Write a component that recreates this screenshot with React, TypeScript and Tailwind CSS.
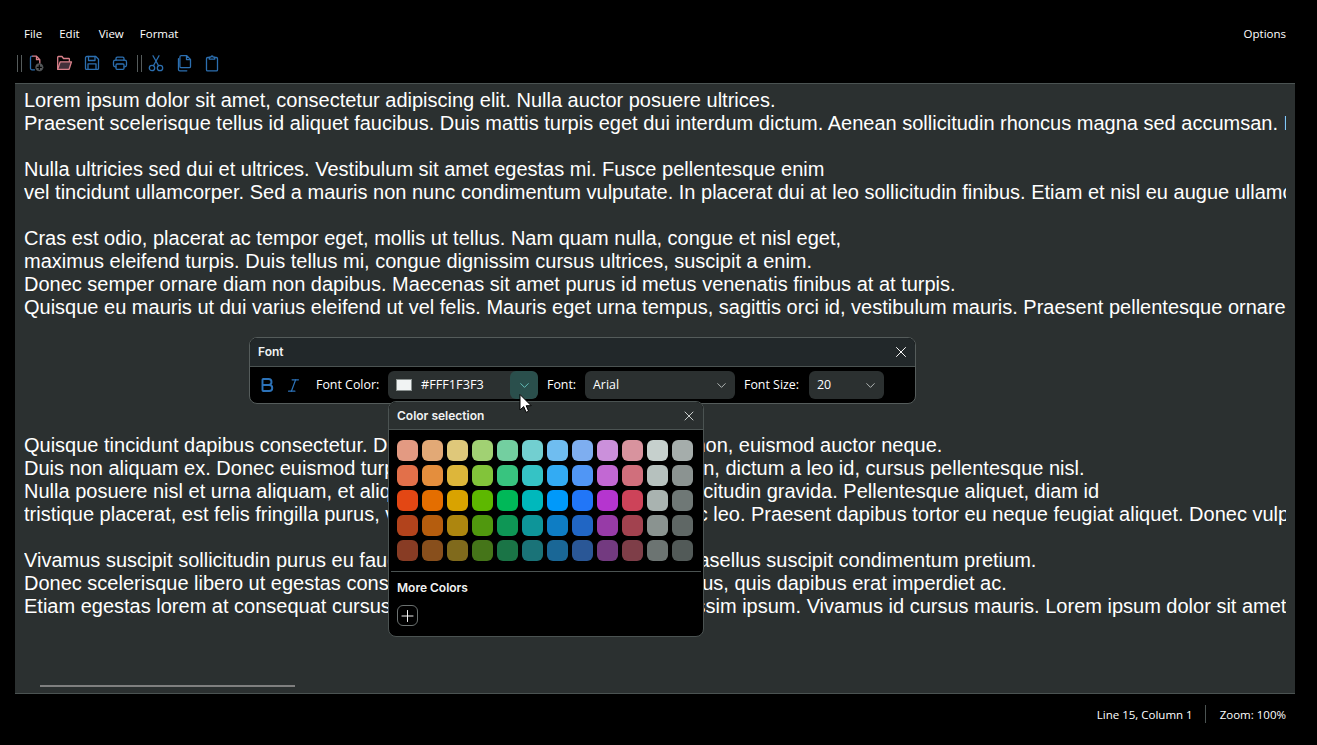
import { X, ChevronDown, Plus, Bold, Italic } from "lucide-react";

const swatches = [
  ["#E39A82","#E2A976","#DFC87A","#A1D173","#73CFA0","#72CFD0","#6FBDF0","#7EAEF0","#CB90DB","#D8939E","#C6D0CD","#A5ADAB"],
  ["#E2704A","#E48E3D","#DDB63A","#82C43A","#38C47F","#35C3C5","#33ABF3","#5096F5","#C268D3","#D06F7C","#B6C1BE","#8B9391"],
  ["#E34714","#E46E00","#D9A300","#5DB800","#00B858","#00B8BC","#0099FA","#2176F8","#B535CF","#CD4359","#A9B3B0","#6F7876"],
  ["#B2431C","#B55D0E","#AD860F","#50980E","#0E9655","#0E9599","#0E7DC4","#2166C4","#973BA7","#A2424F","#8A9390","#5F6765"],
  ["#883C24","#884F1C","#806A1C","#457519","#1A7446","#1A7378","#1A6796","#2A5796","#733A80","#7E3E48","#6C7472","#525A58"],
];

const lines = [
  "Lorem ipsum dolor sit amet, consectetur adipiscing elit. Nulla auctor posuere ultrices.",
  "Praesent scelerisque tellus id aliquet faucibus. Duis mattis turpis eget dui interdum dictum. Aenean sollicitudin rhoncus magna sed accumsan. Integer vitae nisl non velit",
  "",
  "Nulla ultricies sed dui et ultrices. Vestibulum sit amet egestas mi. Fusce pellentesque enim",
  "vel tincidunt ullamcorper. Sed a mauris non nunc condimentum vulputate. In placerat dui at leo sollicitudin finibus. Etiam et nisl eu augue ullamcorper",
  "",
  "Cras est odio, placerat ac tempor eget, mollis ut tellus. Nam quam nulla, congue et nisl eget,",
  "maximus eleifend turpis. Duis tellus mi, congue dignissim cursus ultrices, suscipit a enim.",
  "Donec semper ornare diam non dapibus. Maecenas sit amet purus id metus venenatis finibus at at turpis.",
  "Quisque eu mauris ut dui varius eleifend ut vel felis. Mauris eget urna tempus, sagittis orci id, vestibulum mauris. Praesent pellentesque ornare",
  "",
  "",
  "",
  "",
  "",
  "Quisque tincidunt dapibus consectetur. Donec vitae ac lorem porta rhoncus non, euismod auctor neque.",
  "Duis non aliquam ex. Donec euismod turpis vel felis tempor, mollis sapien non, dictum a leo id, cursus pellentesque nisl.",
  "Nulla posuere nisl et urna aliquam, et aliquam nunc nisi dapibus. Integer sollicitudin gravida. Pellentesque aliquet, diam id",
  "tristique placerat, est felis fringilla purus, vitae gravida mauris urna sed ut nec leo. Praesent dapibus tortor eu neque feugiat aliquet. Donec vulputate",
  "",
  "Vivamus suscipit sollicitudin purus eu faucibus. Sed vel lectus eget nunc. Phasellus suscipit condimentum pretium.",
  "Donec scelerisque libero ut egestas consequat. Nunc vel nisl lacus tellus purus, quis dapibus erat imperdiet ac.",
  "Etiam egestas lorem at consequat cursus. Aenean ac dolor nec nisi eu dignissim ipsum. Vivamus id cursus mauris. Lorem ipsum dolor sit amet",
];

const BLUE = "#2C6FB0";
const PINK = "#D9808A";

function Icon({ children }: { children: React.ReactNode }) {
  return (
    <svg width="18" height="18" viewBox="0 0 18 18" fill="none" stroke={BLUE} strokeWidth="1.3" strokeLinejoin="round" strokeLinecap="round">
      {children}
    </svg>
  );
}

function NewFileIcon() {
  return (
    <Icon>
      <path d="M5.500 2.200H5A1.500 1.500 0 0 0 3.500 3.700v10.600A1.500 1.500 0 0 0 5 15.800h2.500" />
      <path d="M5.800 2.200H9.500l3.300 3.500v3.500M9.500 2.200v3.500h3.300" stroke={PINK} />
      <circle cx="12.300" cy="13.300" r="3.700" fill="#55595A" stroke="#55595A" strokeWidth="0.500" />
      <path d="M12.300 11.200v4.200M10.200 13.300h4.200" stroke="#000" strokeWidth="1.200" />
    </Icon>
  );
}
function FolderIcon() {
  return (
    <Icon>
      <path d="M2.700 15V3.200a0.700 0.700 0 0 1 0.700-0.700H7l1.500 2h5.200a0.700 0.700 0 0 1 0.700 0.700V7.500" stroke={PINK} />
      <path d="M2.700 15.300L5.200 7.800h11.300l-2.400 7.500z" stroke={PINK} fill="#43303A" />
    </Icon>
  );
}
function SaveIcon() {
  return (
    <Icon>
      <path d="M3.800 2.500h9l2.700 2.700v9.200a1 1 0 0 1-1 1H3.500a1 1 0 0 1-1-1V3.800a1.300 1.300 0 0 1 1.300-1.300z" />
      <path d="M5.500 2.500v4h6.500v-4M5 15.400v-5.600h8v5.600" />
    </Icon>
  );
}
function PrinterIcon() {
  return (
    <Icon>
      <path d="M5 6.200V4.500a1.300 1.300 0 0 1 1.300-1.300h5.400A1.300 1.300 0 0 1 13 4.500v1.700" />
      <path d="M5 12.800H4.200a1.700 1.700 0 0 1-1.700-1.700V8a1.800 1.800 0 0 1 1.800-1.800h9.400A1.800 1.800 0 0 1 15.500 8v3.100a1.700 1.700 0 0 1-1.700 1.700H13" />
      <rect x="5" y="10" width="8" height="5.300" rx="1" />
    </Icon>
  );
}
function ScissorsIcon() {
  return (
    <Icon>
      <circle cx="5" cy="14" r="2.700" />
      <circle cx="13" cy="14" r="2.700" />
      <path d="M6.400 11.700L12 1.800M11.600 11.700L6 1.800" />
    </Icon>
  );
}
function CopyIcon() {
  return (
    <Icon>
      <path d="M6.200 1.700h5.600l3.700 3.700v7a1.300 1.300 0 0 1-1.300 1.300H6.200a1.300 1.300 0 0 1-1.300-1.300V3a1.300 1.300 0 0 1 1.300-1.300zM11.500 1.800v3.800h3.900" />
      <path d="M3.500 4.700v11a1.300 1.300 0 0 0 1.300 1.100h7" />
    </Icon>
  );
}
function ClipboardIcon() {
  return (
    <Icon>
      <path d="M6.300 3.500H4.700a1.200 1.200 0 0 0-1.200 1.200v11a1.200 1.200 0 0 0 1.200 1.200h8.600a1.200 1.200 0 0 0 1.200-1.200v-11a1.200 1.200 0 0 0-1.200-1.200h-1.600" />
      <path d="M6.300 5.200V3.200h1.500a1.200 1.200 0 0 1 2.400 0h1.500v2z" />
    </Icon>
  );
}

export default function App() {
  return (
    <div className="relative h-[745px] w-[1317px] overflow-hidden bg-black font-['Open_Sans','Noto_Sans',sans-serif] text-white">
      <div className="flex h-[83px] flex-col px-[15px]">
        <div className="mt-[24px] flex h-[20px] items-center justify-between pl-[9px] pr-[16px] text-[11.5px]">
          <div className="flex gap-[17px]">
            <span>File</span>
            <span>Edit</span>
            <span className="ml-[2px]">View</span>
            <span className="-ml-px">Format</span>
          </div>
          <span>Options</span>
        </div>
        <div className="mt-[9px] flex h-[20px] items-center">
          <div className="ml-[2px] mr-[5px] h-[17px] w-[5px] border-x border-[#555b5b]" />
          <div className="flex items-center gap-[10px]">
            <NewFileIcon />
            <FolderIcon />
            <SaveIcon />
            <PrinterIcon />
          </div>
          <div className="ml-[8px] mr-[5px] h-[17px] w-[5px] border-x border-[#555b5b]" />
          <div className="flex items-center gap-[10px]">
            <ScissorsIcon />
            <CopyIcon />
            <ClipboardIcon />
          </div>
        </div>
      </div>

      <div className="relative mx-[15px] h-[611px] w-[1280px] border-y border-[#4b5352] bg-[#2B3030]">
        <div className="ml-[9px] mt-[5px] w-[1262px] overflow-hidden font-['Liberation_Sans',Arial,sans-serif] text-[20px] leading-[23px] whitespace-nowrap text-white">
          {lines.map((l, i) => (
            <div key={i} className="h-[23px]">{l}</div>
          ))}
        </div>
        <div className="absolute bottom-[6px] left-[25px] h-[2px] w-[255px] bg-[#7f7f7f]" />
      </div>

      <div className="flex h-[51px] items-start justify-end pr-[31px] pt-[11px] text-[11.5px]">
        <span className="leading-[20px]">Line 15, Column 1</span>
        <div className="ml-[12px] mr-[14px] h-[18px] w-px bg-[#4b5352]" />
        <span className="leading-[20px]">Zoom: 100%</span>
      </div>

      {/* Font dialog */}
      <div className="absolute left-[249px] top-[337px] h-[67px] w-[667px] overflow-hidden rounded-[8px] border border-[#555c5b] bg-black font-['Inter',sans-serif]">
        <div className="flex h-[29px] items-center justify-between border-b border-[#4b5352] bg-[#22282A] pl-[8px] pr-[5px]">
          <span className="text-[12px] font-semibold text-[#F1F3F3]">Font</span>
          <X size={18} strokeWidth={1.3} className="text-white" />
        </div>
        <div className="flex h-[36px] items-center pl-[8px] font-['Open_Sans',sans-serif] text-[12.4px]">
          <Bold size={18} strokeWidth={2.6} className="text-[#2C72B8]" />
          <Italic size={17} strokeWidth={1.7} className="ml-[9px] text-[#2C72B8]" />
          <span className="ml-[14px] w-[72px]">Font Color:</span>
          <div className="flex h-[28px] w-[150px] items-center overflow-hidden rounded-[6px] bg-[#2B3030]">
            <div className="ml-[8px] h-[12px] w-[16px] border border-[#8a9190] bg-[#F1F3F3]" />
            <span className="ml-[9px] flex-1 text-[12.7px]">#FFF1F3F3</span>
            <div className="flex h-full w-[28px] items-center justify-center rounded-[6px] bg-[#2A4F4C]">
              <ChevronDown size={15} strokeWidth={1.3} className="text-[#6FD6D0]" />
            </div>
          </div>
          <span className="ml-[9px] w-[38px]">Font:</span>
          <div className="flex h-[28px] w-[150px] items-center justify-between rounded-[6px] bg-[#2B3030] pl-[8px] pr-[6px]">
            <span>Arial</span>
            <ChevronDown size={15} strokeWidth={1.3} className="text-[#cfd4d3]" />
          </div>
          <span className="ml-[9px] w-[64px]">Font Size:</span>
          <div className="ml-[1px] flex h-[28px] w-[75px] items-center justify-between rounded-[6px] bg-[#2B3030] pl-[8px] pr-[6px]">
            <span>20</span>
            <ChevronDown size={15} strokeWidth={1.3} className="text-[#cfd4d3]" />
          </div>
        </div>
      </div>

      {/* Color popup */}
      <div className="absolute left-[388px] top-[401px] h-[236px] w-[316px] overflow-hidden rounded-[8px] border border-[#4b5352] bg-black font-['Inter',sans-serif]">
        <div className="flex h-[28px] items-center justify-between border-b border-[#4b5352] bg-[#2B3030] pl-[8px] pr-[6px]">
          <span className="text-[12px] font-semibold text-[#F1F3F3]">Color selection</span>
          <X size={16} strokeWidth={1.4} className="text-[#d5d9d8]" />
        </div>
        <div className="grid grid-cols-[repeat(12,21px)] gap-[4px] pl-[8px] pt-[10px]">
          {swatches.flat().map((c, i) => (
            <div key={i} className="h-[21px] w-[21px] rounded-[6px]" style={{ backgroundColor: c }} />
          ))}
        </div>
        <div className="mx-[2px] mt-[10px] border-t border-[#4b5352]" />
        <div className="pl-[8px] pt-[8px] text-[12px] font-semibold leading-[15px] text-[#F1F3F3]">More Colors</div>
        <div className="ml-[8px] mt-[10px] flex h-[21px] w-[21px] items-center justify-center rounded-[6px] border border-[#6b7170]">
          <Plus size={20} strokeWidth={1.2} className="text-white" />
        </div>
      </div>

      {/* Mouse cursor */}
      <svg className="absolute left-[519px] top-[394px]" width="14" height="20" viewBox="0 0 14 20">
        <path d="M1 0.500v15.500l3.700-3.400 2.400 5.700 2.500-1.100-2.400-5.500h5z" fill="#fff" stroke="#000" strokeWidth="1" />
      </svg>
    </div>
  );
}
